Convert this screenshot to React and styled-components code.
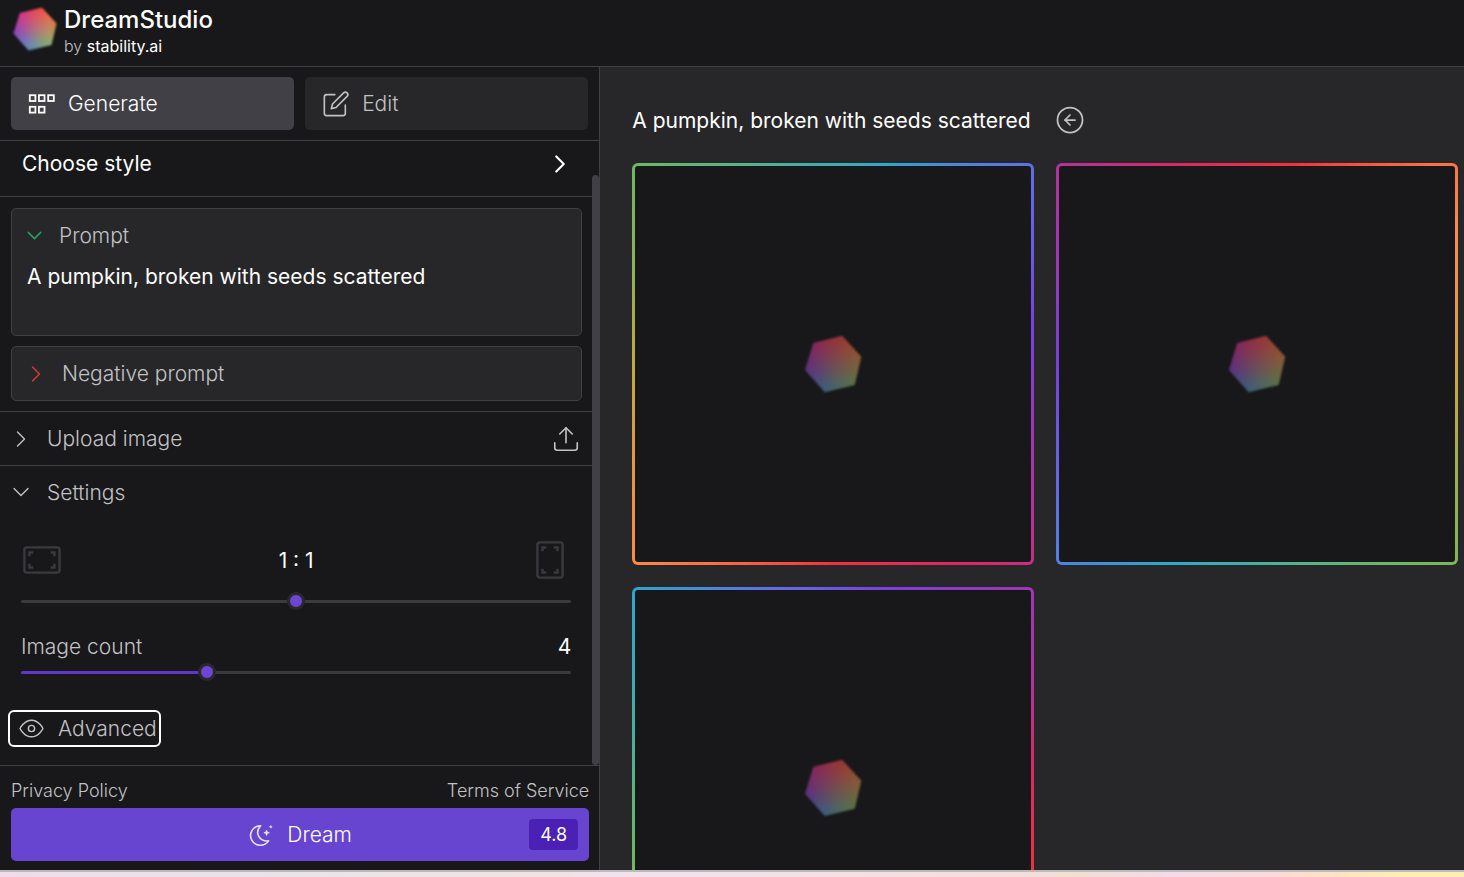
import React, { useState } from "react";
import styled, { createGlobalStyle } from "styled-components";
import {
  FiChevronDown,
  FiChevronRight,
  FiEdit,
  FiEye,
  FiUpload,
} from "react-icons/fi";
import { CircleArrowLeft } from "lucide-react";

const images = [{ id: 1, angle: 315 }, { id: 2, angle: 145 }, { id: 3, angle: 252 }];

function Logo({ size, dim }) {
  return (
    <LogoGlow $size={size} $dim={dim}>
      <LogoShape />
    </LogoGlow>
  );
}

function GridIcon() {
  return (
    <svg width="28" height="20" fill="none" stroke="currentColor" strokeWidth="1.8">
      <rect x="1.8" y="1.2" width="5.6" height="5.8" />
      <rect x="10.9" y="1.2" width="5.6" height="5.8" />
      <rect x="20.2" y="1.2" width="5.6" height="5.8" />
      <rect x="1.8" y="12.8" width="5.6" height="5.8" />
      <rect x="10.9" y="12.8" width="5.6" height="5.8" />
    </svg>
  );
}

function MoonIcon() {
  return (
    <svg width="26" height="26" viewBox="0 0 26 26">
      <path
        d="M12.6 3.7A9.8 9.8 0 1 0 20.6 18.9C11.5 19.6 6 11 12.6 3.7Z"
        fill="none"
        stroke="currentColor"
        strokeWidth="1.6"
        strokeLinejoin="round"
      />
      <path
        d="M18.6 8l.8 2 2 .8-2 .8-.8 2-.8-2-2-.8 2-.8zM22.8 3.4l.4 1 1 .4-1 .4-.4 1-.4-1-1-.4 1-.4z"
        fill="currentColor"
        stroke="currentColor"
        strokeWidth=".6"
      />
    </svg>
  );
}

// both orientations share a square box so the row stays centred
function FrameIcon({ portrait }) {
  return (
    <svg width="38" height="38" fill="none" stroke="#3a3a3d" strokeWidth="2.4">
      <g transform={portrait ? "rotate(90 19 19)" : undefined}>
        <rect x="1.4" y="6.4" width="35.2" height="25.2" rx="2.5" />
        <path d="M6.5 15.2v-3.7h3.8M31.5 15.2v-3.7h-3.8M6.5 22.8v3.7h3.8M31.5 22.8v3.7h-3.8" />
      </g>
    </svg>
  );
}

function App() {
  const [prompt, setPrompt] = useState("A pumpkin, broken with seeds scattered");
  const [ratio, setRatio] = useState(5);
  const [count, setCount] = useState(4);

  return (
    <Page>
      <GlobalStyle />
      <Header>
        <Logo size={46} />
        <Brand>
          <h1>DreamStudio</h1>
          <p>
            by <a href="#stability">stability.ai</a>
          </p>
        </Brand>
      </Header>
      <Body>
        <Sidebar>
          <Tabs>
            <Tab $active>
              <GridIcon />
              Generate
            </Tab>
            <Tab>
              <FiEdit size={28} strokeWidth={1.4} />
              Edit
            </Tab>
          </Tabs>
          <ScrollArea>
            <Options>
              <StyleButton>
                Choose style
                <FiChevronRight size={30} strokeWidth={1.7} />
              </StyleButton>
              <Prompts>
                <PromptBox>
                  <BoxToggle $tone="#22a55a">
                    <FiChevronDown size={25} strokeWidth={1.4} />
                    <label htmlFor="prompt">Prompt</label>
                  </BoxToggle>
                  <PromptInput
                    id="prompt"
                    rows="2"
                    spellCheck="false"
                    value={prompt}
                    onChange={(e) => setPrompt(e.target.value)}
                  />
                </PromptBox>
                <PromptBox>
                  <BoxToggle as="button" $tone="#d23b3b">
                    <FiChevronRight size={28} strokeWidth={1.3} />
                    <span>Negative prompt</span>
                  </BoxToggle>
                </PromptBox>
              </Prompts>
              <SectionRow>
                <SectionToggle>
                  <FiChevronRight size={28} strokeWidth={1.2} />
                  Upload image
                </SectionToggle>
                <IconButton aria-label="Upload">
                  <FiUpload size={30} strokeWidth={1.3} />
                </IconButton>
              </SectionRow>
              <SectionRow $last>
                <SectionToggle>
                  <FiChevronDown size={28} strokeWidth={1.2} />
                  Settings
                </SectionToggle>
              </SectionRow>
              <Settings>
                <RatioRow>
                  <FrameIcon />
                  <Value as="label" htmlFor="ratio">
                    1 : 1
                  </Value>
                  <FrameIcon portrait />
                </RatioRow>
                <Slider
                  id="ratio"
                  min="0"
                  max="10"
                  value={ratio}
                  onChange={(e) => setRatio(e.target.value)}
                />
                <CountRow>
                  <label htmlFor="count">Image count</label>
                  <Value>{count}</Value>
                </CountRow>
                <Slider
                  id="count"
                  min="1"
                  max="10"
                  value={count}
                  $fill={((count - 1) / 9) * 100}
                  onChange={(e) => setCount(e.target.value)}
                />
              </Settings>
              <AdvancedButton>
                <FiEye size={25} strokeWidth={1.4} />
                Advanced
              </AdvancedButton>
            </Options>
            <ScrollTrack>
              <ScrollThumb />
            </ScrollTrack>
          </ScrollArea>
          <Footer>
            <Legal>
              <a href="#privacy">Privacy Policy</a>
              <a href="#terms">Terms of Service</a>
            </Legal>
            <DreamButton>
              <span />
              <DreamLabel>
                <MoonIcon />
                Dream
              </DreamLabel>
              <Cost>4.8</Cost>
            </DreamButton>
          </Footer>
        </Sidebar>
        <Gallery>
          <GalleryTitle>
            <h2>{prompt}</h2>
            <IconButton aria-label="Use this prompt">
              <CircleArrowLeft size={30} strokeWidth={1.4} />
            </IconButton>
          </GalleryTitle>
          <Cards>
            {images.map((image) => (
              <Card key={image.id} $angle={image.angle}>
                <Logo size={60} dim />
              </Card>
            ))}
          </Cards>
        </Gallery>
      </Body>
      <Backdrop />
    </Page>
  );
}

export default App;

// Components
const GlobalStyle = createGlobalStyle`
  * {
    box-sizing: border-box;
  }

  body {
    margin: 0;
    background-color: #18181a;
    color: #c2c2c4;
    font-family: Inter, sans-serif;
    font-size: 21px;
    font-weight: 300;
  }

  h1, h2, p {
    margin: 0;
  }

  a {
    color: inherit;
    text-decoration: none;
  }

  button {
    padding: 0;
    border: 0;
    background: none;
    color: inherit;
    font: inherit;
    cursor: pointer;
  }

  svg {
    display: block;
    flex: none;
  }
`;

const Page = styled.div`
  height: 100vh;
  display: flex;
  flex-direction: column;
`;

const Header = styled.header`
  display: flex;
  align-items: flex-start;
  gap: 6px;
  height: 67px;
  padding: 6px 12px 0;
  border-bottom: 1px solid #404043;
`;

const Brand = styled.div`
  h1 {
    color: #ffffff;
    font-size: 24px;
    font-weight: 500;
    line-height: 28px;
  }

  p {
    font-size: 16px;
    line-height: 24px;
  }

  a {
    color: #ffffff;
    font-weight: 400;
  }
`;

const LogoGlow = styled.div`
  flex: none;
  width: ${(props) => props.$size}px;
  height: ${(props) => props.$size}px;
  opacity: ${(props) => (props.$dim ? 0.58 : 1)};
  filter: blur(1px);
`;

const LogoShape = styled.div`
  width: 100%;
  height: 100%;
  overflow: hidden;
  clip-path: polygon(17% 15%, 65% 3%, 97% 38%, 86% 85%, 36% 97%, 3% 60%);

  &::before {
    content: "";
    display: block;
    width: 100%;
    height: 100%;
    background:
      radial-gradient(circle, #b8707c, rgba(184, 112, 124, 0) 50%),
      conic-gradient(
        from 15deg,
        #fb4a3c,
        #e08a48 60deg,
        #80b868 120deg,
        #4a94c8 185deg,
        #8440d0 240deg,
        #dc2c84 305deg,
        #fb4a3c
      );
    filter: blur(5px);
    transform: scale(1.3);
  }
`;

const Body = styled.div`
  flex: 1;
  min-height: 0;
  display: flex;
`;

const Sidebar = styled.aside`
  flex: 0 0 41%;
  display: flex;
  flex-direction: column;
  border-right: 1px solid #404043;
`;

const Tabs = styled.nav`
  display: flex;
  gap: 11px;
  padding: 10px 11px;
  border-bottom: 1px solid #404043;
`;

const Tab = styled.button`
  flex: 1;
  display: flex;
  align-items: center;
  gap: 12px;
  height: 53px;
  padding: 0 17px;
  border-radius: 5px;
  background-color: ${(props) => (props.$active ? "#404046" : "#272729")};
  color: ${(props) => (props.$active ? "#ffffff" : "#c2c2c4")};
`;

const ScrollArea = styled.div`
  flex: 1;
  min-height: 0;
  display: flex;
`;

const Options = styled.div`
  flex: 1;
`;

const ScrollTrack = styled.div`
  width: 7px;
  padding-top: 34px;
`;

const ScrollThumb = styled.div`
  height: 100%;
  border-radius: 4px;
  background-color: #404046;
`;

const StyleButton = styled.button`
  display: flex;
  align-items: center;
  justify-content: space-between;
  width: 100%;
  height: 56px;
  padding: 0 17px 10px 22px;
  border-bottom: 1px solid #404043;
  color: #ffffff;
  font-weight: 400;
`;

const Prompts = styled.div`
  display: flex;
  flex-direction: column;
  gap: 10px;
  padding: 11px 10px 10px 11px;
  border-bottom: 1px solid #404043;
`;

const PromptBox = styled.div`
  border: 1px solid #404043;
  border-radius: 5px;
  background-color: #272729;
`;

const BoxToggle = styled.div`
  display: flex;
  align-items: center;
  gap: 12px;
  width: 100%;
  height: 53px;
  padding: 0 10px;

  svg {
    color: ${(props) => props.$tone};
  }
`;

const PromptInput = styled.textarea`
  display: block;
  width: 100%;
  height: 73px;
  padding: 0 15px;
  border: 0;
  outline: 0;
  resize: none;
  background: none;
  color: #ffffff;
  font: inherit;
  font-weight: 400;
  line-height: 30px;
`;

const SectionRow = styled.div`
  display: flex;
  align-items: center;
  justify-content: space-between;
  height: ${(props) => (props.$last ? 52 : 54)}px;
  padding: 0 11px 0 7px;
  border-bottom: ${(props) => (props.$last ? "0" : "1px solid #404043")};
`;

const SectionToggle = styled.button`
  display: flex;
  align-items: center;
  gap: 12px;
`;

const IconButton = styled.button`
  display: flex;
`;

const Settings = styled.div`
  padding: 22px 21px 0;
`;

const RatioRow = styled.div`
  display: flex;
  align-items: center;
  justify-content: space-between;
  height: 40px;
  padding: 0 2px;
`;

const Value = styled.span`
  color: #ffffff;
  font-weight: 400;
`;

const CountRow = styled.div`
  display: flex;
  align-items: center;
  justify-content: space-between;
  height: 33px;
  margin-top: 20px;
`;

const Slider = styled.input.attrs({ type: "range" })`
  appearance: none;
  display: block;
  width: 100%;
  height: 18px;
  margin: 12px 0 0;
  background: none;

  ${CountRow} + & {
    margin-top: 0;
  }

  &::-webkit-slider-runnable-track {
    height: 3px;
    border-radius: 2px;
    background: linear-gradient(
      to right,
      #5f38c9 ${(props) => props.$fill || 0}%,
      #3a3a3d ${(props) => props.$fill || 0}%
    );
  }

  &::-webkit-slider-thumb {
    appearance: none;
    width: 18px;
    height: 18px;
    margin-top: -8px;
    border: 3px solid #29292c;
    border-radius: 50%;
    background-color: #6c47d6;
  }
`;

const AdvancedButton = styled.button`
  display: flex;
  align-items: center;
  gap: 14px;
  height: 37px;
  margin: 29px 0 0 8px;
  padding: 0 2px 0 9px;
  border: 2px solid #ffffff;
  border-radius: 6px;
`;

const Footer = styled.footer`
  padding: 8px 10px 9px 11px;
  border-top: 1px solid #404043;
`;

const Legal = styled.div`
  display: flex;
  justify-content: space-between;
  font-size: 18px;
  line-height: 34px;
`;

const DreamButton = styled.button`
  display: grid;
  grid-template-columns: 1fr auto 1fr;
  align-items: center;
  width: 100%;
  height: 53px;
  padding: 0 11px;
  border-radius: 5px;
  background-color: #6845d1;
  color: #ffffff;
`;

const DreamLabel = styled.span`
  display: flex;
  align-items: center;
  gap: 13px;

  svg {
    opacity: 0.85;
  }
`;

const Cost = styled.span`
  justify-self: end;
  padding: 0 11px;
  border-radius: 4px;
  background-color: #4a20b5;
  font-size: 18px;
  font-weight: 400;
  line-height: 31px;
`;

const Gallery = styled.main`
  flex: 1;
  min-width: 0;
  padding: 32px 6px 0 32px;
  overflow: hidden;
  background-color: #272729;
`;

const GalleryTitle = styled.div`
  display: flex;
  align-items: center;
  gap: 24px;
  height: 42px;

  h2 {
    color: #ffffff;
    font-size: 21px;
    font-weight: 400;
  }
`;

const Cards = styled.div`
  display: grid;
  grid-template-columns: 1fr 1fr;
  gap: 22px;
  margin-top: 22px;
`;

const Card = styled.div`
  display: flex;
  align-items: center;
  justify-content: center;
  aspect-ratio: 1;
  border: 3px solid transparent;
  border-radius: 6px;
  background:
    linear-gradient(#18181a, #18181a) padding-box,
    conic-gradient(
        from ${(props) => props.$angle}deg,
        #6cb863,
        #2ea8cc 60deg,
        #5f6fe8 90deg,
        #7a3fe0 125deg,
        #b432a0 170deg,
        #d82a68 190deg,
        #f5303c 225deg,
        #ff8a48 270deg,
        #c9a83c 310deg,
        #6cb863
      )
      border-box;
`;

const Backdrop = styled.div`
  height: 7px;
  border-top: 2px solid #bfb9b9;
  background: linear-gradient(
    to right,
    #f0dcec,
    #e9e4e8 20%,
    #f3e2e2 38%,
    #f2e2ee 42%,
    #f3e0dd 66%,
    #f0e0d4 74%,
    #f2dce8 80%,
    #fbdcd4 88%,
    #fbf0b0 96%
  );
`;
